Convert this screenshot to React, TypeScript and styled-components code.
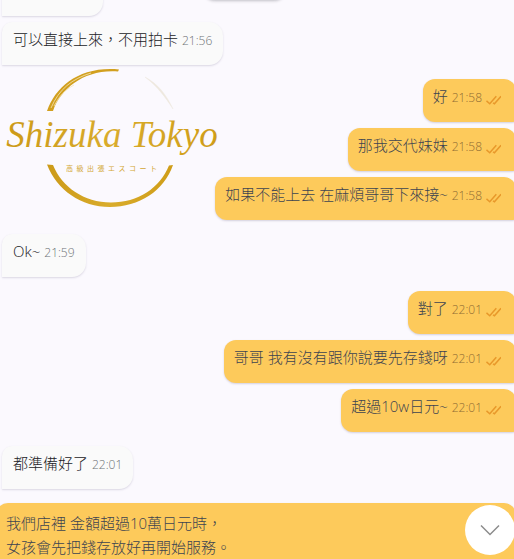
import React from "react";
import styled, { createGlobalStyle, css } from "styled-components";

const GlobalStyle = createGlobalStyle`
  * { box-sizing: border-box; }
  html, body { margin: 0; height: 100%; overflow: hidden; }
  body {
    background: #fbf9fe;
    font-family: "Open Sans", "Noto Sans CJK TC", sans-serif;
  }
`;

const Screen = styled.main`
  position: relative;
  height: 100vh;
  overflow: hidden;
`;

const Thread = styled.div`
  display: flex;
  flex-direction: column;
  gap: 14px;
  margin: -27px -2px 0 2px;
`;

const Group = styled.section`
  display: flex;
  flex-direction: column;
  gap: 6px;
`;

const Bubble = styled.article<{ $own?: boolean; $wide?: boolean }>`
  display: flex;
  align-items: flex-start;
  gap: 4px;
  min-height: 43px;
  padding: 5px 11px 14px;
  font-size: 15px;
  line-height: 24px;
  font-weight: 300;
  ${({ $own }) =>
    $own
      ? css`
          align-self: flex-end;
          padding: 5px 15px 14px 10px;
          border-radius: 12px 12px 4px 12px;
          background: #fdca5b;
          color: #3d4450;
          box-shadow: 0 1px 2px rgba(90, 80, 120, 0.24);
        `
      : css`
          align-self: flex-start;
          border-radius: 10px 14px 14px 0;
          background: #fafafa;
          color: #222226;
          box-shadow: 0 1px 2px rgba(90, 80, 120, 0.2);
        `}
  ${({ $wide }) =>
    $wide &&
    css`
      align-self: stretch;
      margin-left: -6px;
      padding-top: 8px;
    `}
`;

const CutBubble = styled(Bubble)`
  width: 101px;
`;

const Body = styled.p`
  margin: 0;
  white-space: pre-line;
`;

const Stamp = styled.time<{ $own?: boolean }>`
  margin-top: 4px;
  font-size: 12px;
  line-height: 20px;
  color: ${({ $own }) => ($own ? "#8f6c34" : "#6f7377")};
`;

const Ticks = styled.svg`
  width: 15px;
  height: 10px;
  margin-top: 11px;
`;

const Watermark = styled.svg`
  position: absolute;
  left: 5px;
  top: 65px;
  width: 215px;
  height: 145px;
  pointer-events: none;
`;

const DatePill = styled.div`
  position: absolute;
  left: 203px;
  top: -24px;
  width: 83px;
  height: 24px;
  border-radius: 12px;
  background: #fafafa;
  box-shadow: 0 1px 3px rgba(60, 60, 70, 0.3);
`;

const ScrollButton = styled.button`
  position: absolute;
  right: -1px;
  bottom: 4px;
  display: grid;
  place-items: center;
  width: 50px;
  height: 50px;
  padding: 0;
  border: 0;
  border-radius: 50%;
  background: #fff;
  cursor: pointer;
`;

type Message = { text: string; time?: string; wide?: boolean };
type MessageGroup = { own?: boolean; messages: Message[] };

const groups: MessageGroup[] = [
  {
    own: true,
    messages: [
      { text: "好", time: "21:58" },
      { text: "那我交代妹妹", time: "21:58" },
      { text: "如果不能上去 在麻煩哥哥下來接~", time: "21:58" },
    ],
  },
  { messages: [{ text: "Ok~", time: "21:59" }] },
  {
    own: true,
    messages: [
      { text: "對了", time: "22:01" },
      { text: "哥哥 我有沒有跟你說要先存錢呀", time: "22:01" },
      { text: "超過10w日元~", time: "22:01" },
    ],
  },
  { messages: [{ text: "都準備好了", time: "22:01" }] },
  {
    own: true,
    messages: [
      { text: "我們店裡 金額超過10萬日元時，\n女孩會先把錢存放好再開始服務。", wide: true },
    ],
  },
];

function ReadTicks() {
  return (
    <Ticks viewBox="0 0 16 10" fill="none" stroke="#e8982a" strokeWidth="1.6" role="img" aria-label="Read">
      <path d="M0.500 6l3.500 3 7-8M7.500 8l1.500 1 7-8" />
    </Ticks>
  );
}

function MessageBubble({ message, own }: { message: Message; own?: boolean }) {
  return (
    <Bubble $own={own} $wide={message.wide}>
      <Body>{message.text}</Body>
      {message.time && <Stamp $own={own}>{message.time}</Stamp>}
      {own && message.time && <ReadTicks />}
    </Bubble>
  );
}

function Logo() {
  return (
    <Watermark viewBox="5 65 215 145" role="img" aria-label="Shizuka Tokyo">
      <defs>
        <linearGradient id="gold" x1="0" x2="1">
          <stop offset="0" stopColor="#cc9a18" />
          <stop offset="0.5" stopColor="#d9ac2c" />
          <stop offset="1" stopColor="#cf9d18" />
        </linearGradient>
      </defs>
      <path d="M47 111C56 86 80 66 119 69.500L118 71.500C85 69 61 88 53 111Z" fill="#d2a01f" />
      <path d="M51 108C59 89 72 79 91 73M54 106C60 95 65 90 74 85" fill="none" stroke="#f4e4b8" strokeWidth="0.8" />
      <path d="M145 77C158 84 166 94 173 109C165 97 158 87 145 77Z" fill="#eee8df" stroke="#eee8df" strokeWidth="0.4" />
      <path d="M47 164.500C57 190 81 207 110 207S164 191 173 165L169 165.500C160 188 138 202.500 111 202.500S62 187 53 165Z" fill="url(#gold)" />
      <text
        x="112"
        y="147"
        textAnchor="middle"
        fontFamily="Liberation Serif, serif"
        fontStyle="italic"
        fontSize="37"
        fill="url(#gold)"
      >
        Shizuka Tokyo
      </text>
      <text x="66" y="171" fontFamily="Noto Sans CJK JP, sans-serif" fontSize="7" letterSpacing="3.500" fill="#d3a733">
        高級出張エスコート
      </text>
    </Watermark>
  );
}

export default function App() {
  return (
    <Screen>
      <GlobalStyle />
      <Thread>
        <Group>
          <CutBubble />
          <MessageBubble message={{ text: "可以直接上來，不用拍卡", time: "21:56" }} />
        </Group>
        {groups.map((group, i) => (
          <Group key={i}>
            {group.messages.map((message) => (
              <MessageBubble key={message.text} message={message} own={group.own} />
            ))}
          </Group>
        ))}
      </Thread>
      <DatePill />
      <Logo />
      <ScrollButton aria-label="Scroll to latest message">
        <svg width="20" height="12" viewBox="0 0 20 12" fill="none" stroke="#8c8c8c" strokeWidth="1.5">
          <path d="M1 1.500l9 9 9-9" />
        </svg>
      </ScrollButton>
    </Screen>
  );
}
